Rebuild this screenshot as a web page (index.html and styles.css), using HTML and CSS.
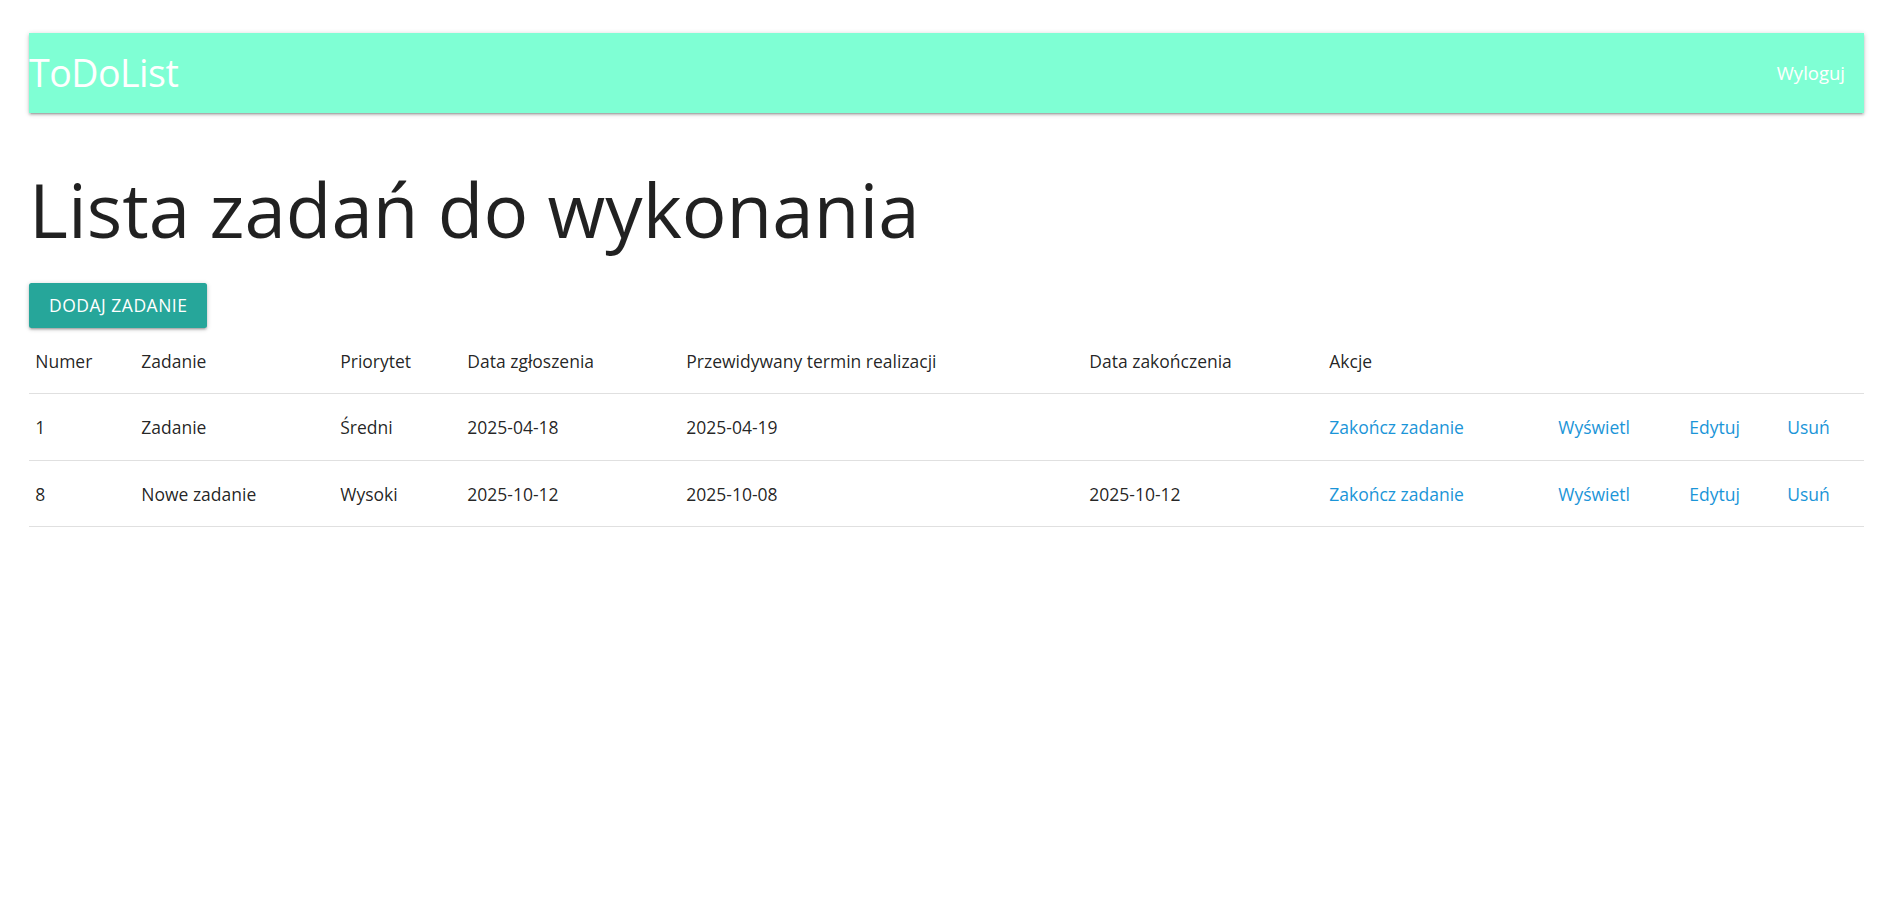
FILE: index.html
```html
<!DOCTYPE html>
<html lang="pl">
<head>
<meta charset="utf-8">
<title>ToDoList</title>
<link rel="stylesheet" href="styles.css">
</head>
<body>
<div class="container">
  <nav class="navbar">
    <a class="brand-logo" href="#">ToDoList</a>
    <ul class="nav-links">
      <li><a href="#">Wyloguj</a></li>
    </ul>
  </nav>

  <h1 class="page-title">Lista zadań do wykonania</h1>

  <a class="btn" href="#">Dodaj zadanie</a>

  <table class="tasks">
    <colgroup>
      <col class="c-num">
      <col class="c-task">
      <col class="c-prio">
      <col class="c-date">
      <col class="c-due">
      <col class="c-done">
      <col class="c-a1">
      <col class="c-a2">
      <col class="c-a3">
      <col class="c-a4">
      <col class="c-rest">
    </colgroup>
    <thead>
      <tr>
        <th>Numer</th>
        <th>Zadanie</th>
        <th>Priorytet</th>
        <th>Data zgłoszenia</th>
        <th>Przewidywany termin realizacji</th>
        <th>Data zakończenia</th>
        <th>Akcje</th>
        <th></th>
        <th></th>
        <th></th>
        <th></th>
      </tr>
    </thead>
    <tbody>
      <tr>
        <td>1</td>
        <td>Zadanie</td>
        <td>Średni</td>
        <td>2025-04-18</td>
        <td>2025-04-19</td>
        <td></td>
        <td><a href="#">Zakończ zadanie</a></td>
        <td><a href="#">Wyświetl</a></td>
        <td><a href="#">Edytuj</a></td>
        <td><a href="#">Usuń</a></td>
        <td></td>
      </tr>
      <tr>
        <td>8</td>
        <td>Nowe zadanie</td>
        <td>Wysoki</td>
        <td>2025-10-12</td>
        <td>2025-10-08</td>
        <td>2025-10-12</td>
        <td><a href="#">Zakończ zadanie</a></td>
        <td><a href="#">Wyświetl</a></td>
        <td><a href="#">Edytuj</a></td>
        <td><a href="#">Usuń</a></td>
        <td></td>
      </tr>
    </tbody>
  </table>
</div>
</body>
</html>
```

FILE: styles.css
```css
html, body {
  margin: 0;
  padding: 0;
  background: #ffffff;
}

body {
  font-family: "Open Sans", "Noto Sans", "Liberation Sans", sans-serif;
  font-size: 18.75px;
  line-height: 1.5;
  color: rgba(0, 0, 0, 0.87);
}

a {
  text-decoration: none;
  color: #1b95d8;
}

.container {
  margin: 0 27px 0 29px;
  padding-top: 33px;
}

.navbar {
  height: 80px;
  background: #7fffd4;
  display: flex;
  align-items: center;
  justify-content: space-between;
  box-shadow: 0 2px 2px 0 rgba(0,0,0,0.14), 0 3px 1px -2px rgba(0,0,0,0.12), 0 1px 5px 0 rgba(0,0,0,0.2);
}

.brand-logo {
  color: #ffffff;
  font-size: 37.5px;
  line-height: 80px;
  letter-spacing: -0.5px;
}

.nav-links {
  list-style: none;
  margin: 0;
  padding: 0;
  display: flex;
}

.nav-links a {
  display: block;
  color: #ffffff;
  font-size: 18.5px;
  line-height: 80px;
  padding: 0 19px;
}

.page-title {
  font-size: 74.5px;
  font-weight: 400;
  line-height: 1.1;
  margin: 56px 0 32px;
  letter-spacing: 0;
}

.btn {
  display: inline-flex;
  align-items: center;
  height: 45px;
  padding: 0 20px;
  background: #26a69a;
  color: #ffffff;
  text-transform: uppercase;
  font-size: 17.5px;
  letter-spacing: 0.5px;
  border-radius: 2.5px;
  box-shadow: 0 2px 2px 0 rgba(0,0,0,0.14), 0 3px 1px -2px rgba(0,0,0,0.12), 0 1px 5px 0 rgba(0,0,0,0.2);
  vertical-align: top;
}

.tasks {
  width: 100%;
  border-collapse: collapse;
  table-layout: fixed;
}

.tasks tr {
  border-bottom: 1px solid rgba(0, 0, 0, 0.12);
}

.tasks th,
.tasks td {
  padding: 18.75px 6.25px;
  text-align: left;
  font-weight: 400;
  vertical-align: middle;
  white-space: nowrap;
  font-size: 17.5px;
  line-height: 28px;
}

.c-num { width: 106px; }
.c-task { width: 199px; }
.c-prio { width: 127px; }
.c-date { width: 219px; }
.c-due { width: 403px; }
.c-done { width: 240px; }
.c-a1 { width: 229px; }
.c-a2 { width: 131px; }
.c-a3 { width: 98px; }
.c-a4 { width: 83px; }
.c-rest { width: auto; }
```
